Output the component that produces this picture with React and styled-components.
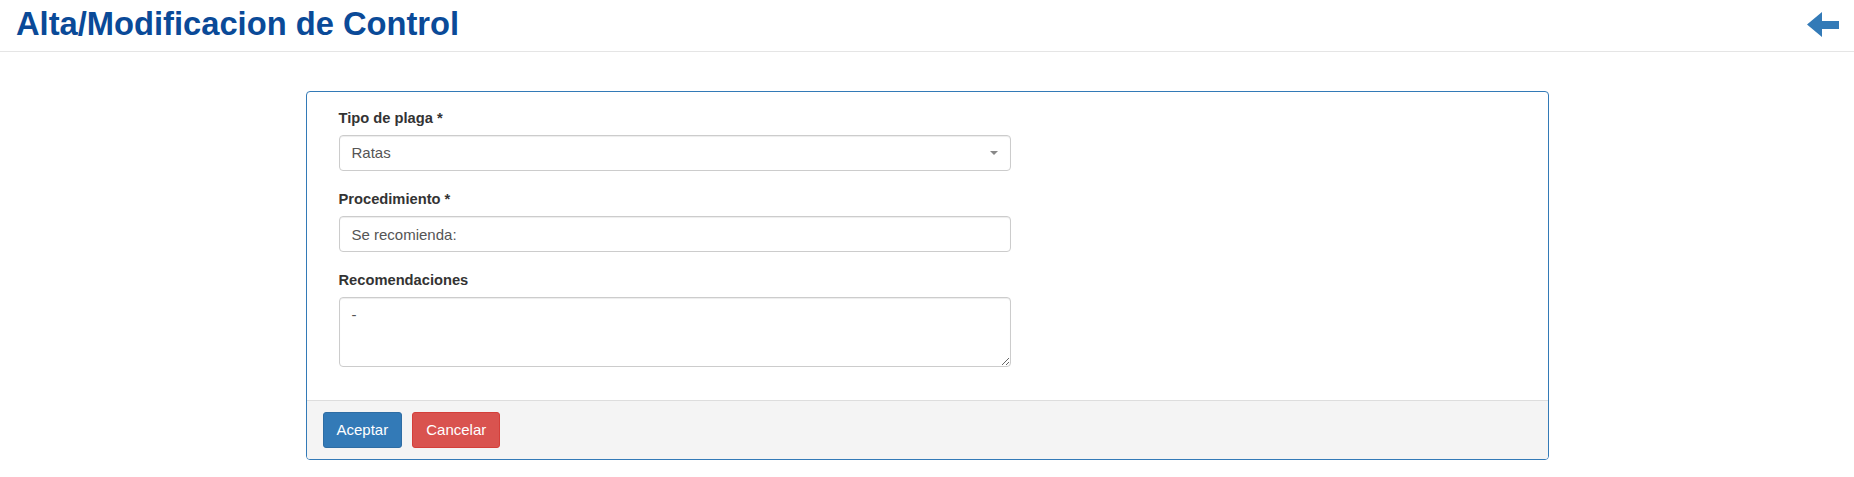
import React from 'react';
import styled, { createGlobalStyle } from 'styled-components';

const GlobalStyle = createGlobalStyle`
  html, body {
    margin: 0;
    padding: 0;
    background: #fff;
    font-family: "Liberation Sans", Arial, sans-serif;
    color: #333;
  }
  * { box-sizing: border-box; }
`;

const Header = styled.header`
  display: flex;
  align-items: center;
  justify-content: space-between;
  height: 52px;
  padding: 0 15px 0 16px;
  border-bottom: 1px solid #e5e5e5;
`;

const Title = styled.h1`
  margin: 0;
  font-size: 32.7px;
  font-weight: 700;
  line-height: 1;
  color: #0a4a98;
  padding-bottom: 2px;
`;

const BackButton = styled.a`
  display: flex;
  width: 32px;
  height: 26px;
  color: #337ab7;
  cursor: pointer;
  margin-bottom: 2px;
`;

const Main = styled.main`
  display: flex;
  justify-content: center;
  padding-top: 39px;
`;

const Panel = styled.div`
  width: 1243px;
  border: 1px solid #337ab7;
  border-radius: 4px;
  background: #fff;
  overflow: hidden;
`;

const PanelBody = styled.div`
  padding: 16px 32px 15px;
`;

const Form = styled.div`
  width: 672px;
`;

const FormGroup = styled.div`
  display: flex;
  flex-direction: column;
  margin-bottom: 18px;
`;

const Label = styled.label`
  font-size: 14.7px;
  font-weight: 700;
  line-height: 20px;
  margin-bottom: 7px;
  color: #333;
`;

const controlBase = `
  width: 100%;
  border: 1px solid #ccc;
  border-radius: 4px;
  box-shadow: inset 0 1px 1px rgba(0, 0, 0, 0.075);
  background: #fff;
  color: #555;
  font-family: "Liberation Sans", Arial, sans-serif;
  font-size: 15px;
  padding: 7px 12px;
  line-height: 20px;
  outline: none;
`;

const Input = styled.input`
  ${controlBase}
  height: 36px;
`;

const SelectWrap = styled.div`
  position: relative;
`;

const Select = styled.select`
  ${controlBase}
  height: 36px;
  appearance: none;
  -webkit-appearance: none;
`;

const Caret = styled.span`
  position: absolute;
  right: 13px;
  top: 16px;
  width: 0;
  height: 0;
  border-left: 4px solid transparent;
  border-right: 4px solid transparent;
  border-top: 4px solid #888;
  pointer-events: none;
`;

const TextArea = styled.textarea`
  ${controlBase}
  height: 70px;
  resize: vertical;
  display: block;
`;

const PanelFooter = styled.div`
  display: flex;
  gap: 10px;
  padding: 11px 16px;
  background: #f4f4f4;
  border-top: 1px solid #ddd;
`;

const Button = styled.button`
  height: 36px;
  padding: 7px 13px;
  font-family: "Liberation Sans", Arial, sans-serif;
  font-size: 15px;
  line-height: 20px;
  color: #fff;
  border-radius: 3px;
  border: 1px solid ${p => (p.$variant === 'danger' ? '#d43f3a' : '#2e6da4')};
  background: ${p => (p.$variant === 'danger' ? '#d9534f' : '#337ab7')};
  cursor: pointer;
`;

const ArrowLeft = () => (
  <svg width="32" height="26" viewBox="0 0 32 26">
    <path d="M0 12.5 L15 0 L15 9 L32 9 L32 17 L15 17 L15 25 Z" fill="currentColor" />
  </svg>
);

export default function App() {
  return (
    <>
      <GlobalStyle />
      <Header>
        <Title>Alta/Modificacion de Control</Title>
        <BackButton>
          <ArrowLeft />
        </BackButton>
      </Header>
      <Main>
        <Panel>
          <PanelBody>
            <Form>
              <FormGroup>
                <Label>Tipo de plaga *</Label>
                <SelectWrap>
                  <Select defaultValue="ratas">
                    <option value="ratas">Ratas</option>
                    <option value="cucarachas">Cucarachas</option>
                  </Select>
                  <Caret />
                </SelectWrap>
              </FormGroup>
              <FormGroup>
                <Label>Procedimiento *</Label>
                <Input defaultValue="Se recomienda:" />
              </FormGroup>
              <FormGroup>
                <Label>Recomendaciones</Label>
                <TextArea defaultValue="-" />
              </FormGroup>
            </Form>
          </PanelBody>
          <PanelFooter>
            <Button>Aceptar</Button>
            <Button $variant="danger">Cancelar</Button>
          </PanelFooter>
        </Panel>
      </Main>
    </>
  );
}
